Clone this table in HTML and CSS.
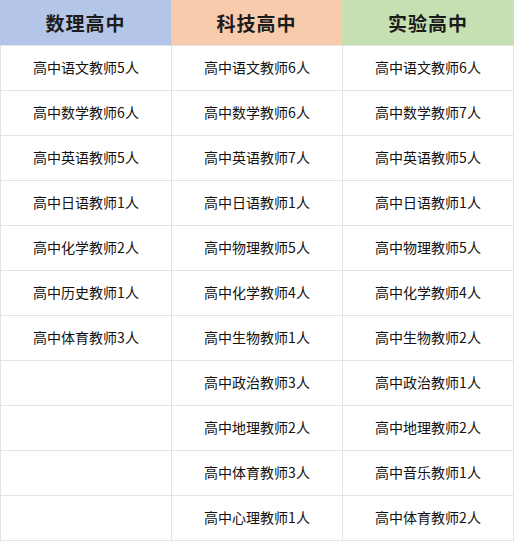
FILE: index.html
```html
<!DOCTYPE html>
<html lang="zh">
<head>
<meta charset="utf-8">
<link rel="stylesheet" href="styles.css">
</head>
<body>
<div class="sheet">
  <div class="head">
    <div class="hcell blue">数理高中</div>
    <div class="hcell orange">科技高中</div>
    <div class="hcell green">实验高中</div>
  </div>
  <div class="grid">
    <div class="cell">高中语文教师5人</div><div class="cell">高中语文教师6人</div><div class="cell">高中语文教师6人</div>
    <div class="cell">高中数学教师6人</div><div class="cell">高中数学教师6人</div><div class="cell">高中数学教师7人</div>
    <div class="cell">高中英语教师5人</div><div class="cell">高中英语教师7人</div><div class="cell">高中英语教师5人</div>
    <div class="cell">高中日语教师1人</div><div class="cell">高中日语教师1人</div><div class="cell">高中日语教师1人</div>
    <div class="cell">高中化学教师2人</div><div class="cell">高中物理教师5人</div><div class="cell">高中物理教师5人</div>
    <div class="cell">高中历史教师1人</div><div class="cell">高中化学教师4人</div><div class="cell">高中化学教师4人</div>
    <div class="cell">高中体育教师3人</div><div class="cell">高中生物教师1人</div><div class="cell">高中生物教师2人</div>
    <div class="cell"></div><div class="cell">高中政治教师3人</div><div class="cell">高中政治教师1人</div>
    <div class="cell"></div><div class="cell">高中地理教师2人</div><div class="cell">高中地理教师2人</div>
    <div class="cell"></div><div class="cell">高中体育教师3人</div><div class="cell">高中音乐教师1人</div>
    <div class="cell"></div><div class="cell">高中心理教师1人</div><div class="cell">高中体育教师2人</div>
  </div>
</div>
</body>
</html>
```

FILE: styles.css
```css
html, body {
  margin: 0;
  padding: 0;
  background: #ffffff;
}
.sheet {
  width: 514px;
  font-family: "Noto Sans CJK SC", "Noto Sans", sans-serif;
}
.head {
  display: grid;
  grid-template-columns: 171px 171px 172px;
  height: 45px;
}
.hcell {
  display: flex;
  align-items: center;
  justify-content: center;
  font-size: 19px;
  font-weight: 700;
  color: #1c1c1c;
  letter-spacing: 1px;
}
.blue { background: #b4c6e7; }
.orange { background: #f8cbad; }
.green { background: #c6e0b4; }
.grid {
  display: grid;
  grid-template-columns: 170px 170px 170px;
  grid-auto-rows: 44px;
  gap: 1px;
  padding: 1px;
  background: #e3e3e3;
}
.cell {
  background: #ffffff;
  display: flex;
  align-items: center;
  justify-content: center;
  padding-bottom: 2px;
  font-size: 14px;
  color: #111111;
}
```
